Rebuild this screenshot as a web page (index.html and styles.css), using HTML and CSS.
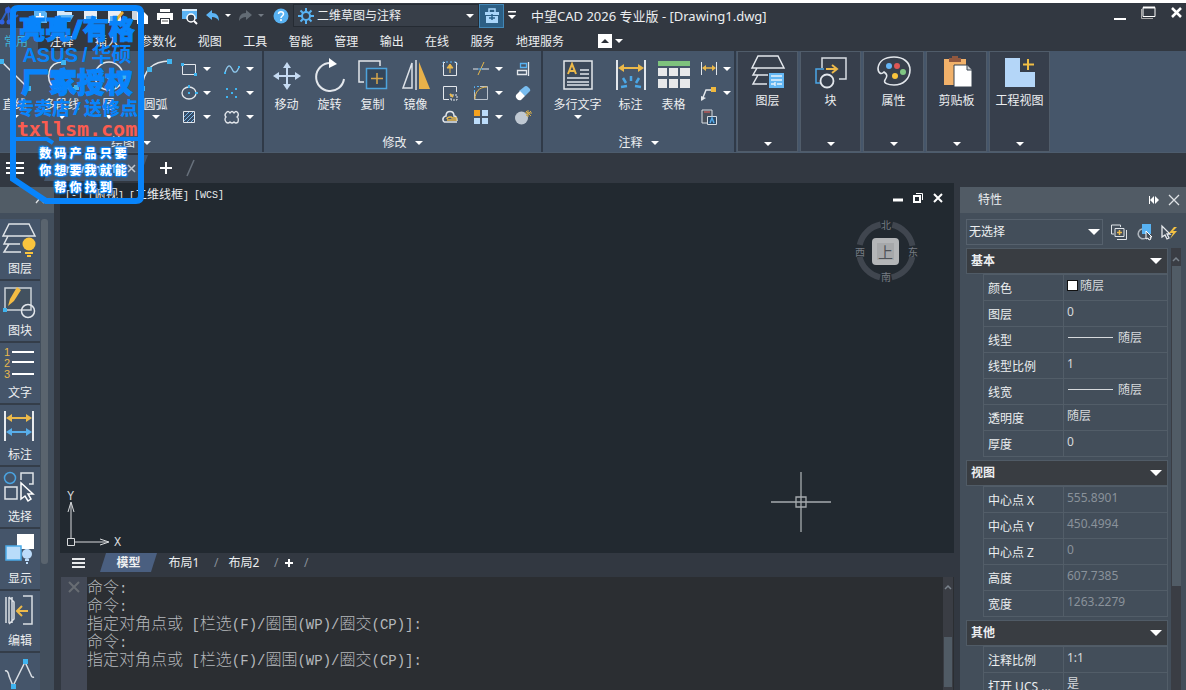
FILE: index.html
```html
<!DOCTYPE html>
<html lang="zh-CN">
<head>
<meta charset="utf-8">
<title>中望CAD 2026 专业版 - [Drawing1.dwg]</title>
<link rel="stylesheet" href="styles.css">
</head>
<body>
<div class="app">
  <header class="titlebar">
    <svg class="logo" width="22" height="22" viewBox="0 0 22 22" fill="none"><path d="M1 17L8 4l1 13 9-7" stroke="#2f62c4" stroke-width="2"/><circle cx="8" cy="5" r="3" fill="#2f62e0"/><circle cx="2" cy="17" r="2.500" fill="#2f62e0"/><circle cx="9" cy="17" r="2.500" fill="#2f62e0"/></svg>
    <button class="qbtn" aria-label="新建"><svg width="18" height="18" viewBox="0 0 18 18"><path d="M3 2h9l4 4v10H3z" fill="#5cb4f5"/><path d="M9 6v8M5 10h8" stroke="#fff" stroke-width="2"/></svg></button>
    <button class="qbtn" aria-label="打开"><svg width="18" height="18" viewBox="0 0 18 18"><path d="M1 15V3h6l2 2h7v3H5z" fill="#d7e9f8"/><path d="M5 8h13l-4 7H1z" fill="#5cb4f5"/></svg></button>
    <button class="qbtn" aria-label="保存"><svg width="18" height="18" viewBox="0 0 18 18"><path d="M3 2h11l2 2v12H3z" fill="#e9eef4"/><path d="M5 9h8v7H5z" fill="#5cb4f5"/></svg></button>
    <button class="qbtn" aria-label="另存为"><svg width="18" height="18" viewBox="0 0 18 18"><path d="M2 2h11l2 2v12H2z" fill="#e9eef4"/><path d="M4 9h8v7H4z" fill="#5cb4f5"/><path d="M9 12l7-8 2 2-7 8z" fill="#f0b23a"/></svg></button>
    <button class="qbtn" aria-label="复制"><svg width="18" height="18" viewBox="0 0 18 18"><path d="M1 2h9v11H1z" fill="#cdd6df"/><path d="M6 5h7l4 4v8H6z" fill="#fff"/></svg></button>
    <button class="qbtn" aria-label="打印"><svg width="18" height="18" viewBox="0 0 18 18"><path d="M4 2h10v3H4zM1 6h16v7h-3v-2H4v2H1z" fill="#fff"/><path d="M5 12h8v5H5z" fill="#fff"/><path d="M6 14h6" stroke="#555" stroke-width="1"/></svg></button>
    <button class="qbtn" aria-label="打印预览"><svg width="18" height="18" viewBox="0 0 18 18"><path d="M1 2h15v10H1z" fill="#5cb4f5"/><path d="M1 3h15" stroke="#dcebf7" stroke-width="2"/><circle cx="10" cy="11" r="4" fill="#38414c" stroke="#fff" stroke-width="1.500"/><path d="M13 14l3 3" stroke="#fff" stroke-width="2"/></svg></button>
    <button class="qbtn undo" aria-label="放弃"><svg width="16" height="16" viewBox="0 0 16 16"><path d="M1 7l6-5v3c5 0 7 3 7 8-2-3-4-4-7-4v3z" fill="#5cb4f5"/></svg><i class="caret"></i></button>
    <button class="qbtn redo" aria-label="重做"><svg width="16" height="16" viewBox="0 0 16 16"><path d="M14 7L8 2v3c-5 0-7 3-7 8 2-3 4-4 7-4v3z" fill="#626b74"/></svg><i class="caret dim"></i></button>
    <button class="qbtn" aria-label="帮助"><svg width="16" height="16" viewBox="0 0 16 16" fill="none"><circle cx="8" cy="8" r="7.500" fill="#58b2f2"/><path d="M5.500 6c0-3 5-3 5 0 0 2-2.500 2-2.500 4" stroke="#fff" stroke-width="1.500"/><circle cx="8" cy="12" r="1" fill="#fff"/></svg></button>
    <div class="workspace">
      <svg width="16" height="16" viewBox="0 0 16 16" fill="none" stroke="#58b2f2"><circle cx="8" cy="8" r="4" stroke-width="2"/><path d="M8 0v4M8 12v4M0 8h4M12 8h4M2.500 2.500L5 5M11 11l2.500 2.500M13.500 2.500L11 5M5 11l-2.500 2.500" stroke-width="2"/></svg>
      <select aria-label="工作空间"><option>二维草图与注释</option></select>
      <i class="caret"></i>
    </div>
    <button class="toolbox" aria-label="工具箱"><svg width="18" height="18" viewBox="0 0 18 18"><path d="M6 5V2h6v3" fill="none" stroke="#a9d6fa" stroke-width="1.500"/><path d="M2 5h14v3H2zM3 9h12v7H3z" fill="#a9d6fa"/><path d="M9 7v6M6 11h6" stroke="#2a628a" stroke-width="1.500"/></svg></button>
    <button class="more" aria-label="自定义"><svg width="10" height="9" viewBox="0 0 10 9" fill="#fff"><path d="M1 0h8v1.500H1zM1 4h8L5 8z"/></svg></button>
    <h1 class="title">中望CAD 2026 专业版 - [Drawing1.dwg]</h1>
    <div class="winctl">
      <button aria-label="最小化"><svg width="14" height="16" viewBox="0 0 14 16"><path d="M1 14h12" stroke="#fff" stroke-width="2"/></svg></button>
      <button aria-label="还原"><svg width="16" height="16" viewBox="0 0 16 16" fill="none" stroke="#fff"><path d="M3 2.500h12v9H3z"/><path d="M3 2.500h12" stroke-width="2"/><path d="M1.500 4v9.500H13" stroke="#aaa" stroke-width="1"/></svg></button>
      <button aria-label="关闭"><svg width="14" height="16" viewBox="0 0 14 16"><path d="M3 3l9 9M12 3l-9 9" stroke="#fff" stroke-width="2.500"/></svg></button>
    </div>
  </header>

  <div class="menubar">
    <nav class="menu">
      <a class="active" href="#home">常用</a><a href="#annotate">注释</a><a href="#insert">插入</a><a href="#param">参数化</a><a href="#view">视图</a><a href="#tools">工具</a><a href="#smart">智能</a><a href="#manage">管理</a><a href="#output">输出</a><a href="#online">在线</a><a href="#service">服务</a><a href="#geo">地理服务</a>
    </nav>
    <button class="fold" aria-label="折叠功能区"><svg width="14" height="14" viewBox="0 0 14 14"><path d="M0 0h14v14H0z" fill="#fff"/><path d="M3 9l4-4 4 4z" fill="#2b3038"/></svg><i class="caret"></i></button>
  </div>

  <section class="ribbon">
    <div class="group">
      <div class="tools draw">
        <button class="big"><svg width="36" height="36" viewBox="0 0 36 36"><path d="M4 4l28 28" stroke="#e3e7ec" stroke-width="1.500"/><path d="M2 2h5v5H2zM29 29h5v5h-5z" fill="#3fb4f0"/></svg><span>直线</span><i class="caret"></i></button>
        <button class="big"><svg width="36" height="36" viewBox="0 0 36 36"><path d="M19 5C3 5 1 22 10 31h20" fill="none" stroke="#e3e7ec" stroke-width="1.500"/><path d="M17 3h5v5h-5zM30 28h5v5h-5z" fill="#3fb4f0"/></svg><span>多段线</span><i class="caret"></i></button>
        <button class="big"><svg width="36" height="36" viewBox="0 0 36 36"><circle cx="18" cy="19" r="14" fill="none" stroke="#e3e7ec" stroke-width="1.500"/><path d="M16 17h5v5h-5zM30 17h5v5h-5z" fill="#3fb4f0"/></svg><span>圆</span><i class="caret"></i></button>
        <button class="big"><svg width="36" height="36" viewBox="0 0 36 36"><path d="M4 32C5 13 15 4 32 4" fill="none" stroke="#e3e7ec" stroke-width="1.500"/><path d="M29 2h5v5h-5zM9 10h5v5H9zM2 29h5v5H2z" fill="#3fb4f0"/></svg><span>圆弧</span><i class="caret"></i></button>
        <div class="minis two">
          <button aria-label="矩形"><svg width="18" height="18" viewBox="0 0 18 18"><path d="M2.500 4.500h13v10h-13z" fill="none" stroke="#e3e7ec"/><path d="M1 3h3v3H1zM14 13h3v3h-3z" fill="#3fb4f0"/></svg><i class="caret"></i></button>
          <button aria-label="样条曲线"><svg width="18" height="18" viewBox="0 0 18 18"><path d="M2 13C4 5 7 4 9 9s5 4 7-2" fill="none" stroke="#8fc9ee" stroke-width="1.300"/><path d="M1 12h2v2H1zM15 6h2v2h-2z" fill="#3fb4f0"/></svg><i class="caret"></i></button>
          <button aria-label="椭圆"><svg width="18" height="18" viewBox="0 0 18 18"><ellipse cx="9" cy="9" rx="7" ry="6" fill="none" stroke="#e3e7ec" stroke-width="1.300"/><path d="M8 8h2v2H8zM8 1h2v3H8zM15 8h3v2h-3z" fill="#3fb4f0"/></svg><i class="caret"></i></button>
          <button aria-label="点"><svg width="18" height="18" viewBox="0 0 18 18" fill="#3fb4f0"><path d="M3 4h2v2H3zM12 4h2v2h-2zM8 8h2v2H8zM3 12h2v2H3zM12 12h2v2h-2z"/></svg><i class="caret"></i></button>
          <button aria-label="填充"><svg width="18" height="18" viewBox="0 0 18 18"><path d="M3.500 3.500h11v11h-11z" fill="#364b66" stroke="#e3e7ec"/><path d="M4 9l5-5M4 13l9-9M7 14l7-7M11 14l3-3" stroke="#79b7e6"/></svg><i class="caret"></i></button>
          <button aria-label="修订云线"><svg width="18" height="18" viewBox="0 0 18 18"><path d="M3 5q2-3 4 0 2-3 4 0 2-3 4 0 1 3-1 4 2 1 1 5-2 2-4 0-2 2-4 0-2 2-4 0-2-3 0-5-2-2 0-4z" fill="none" stroke="#e3e7ec" stroke-width="1.300"/></svg><i class="caret"></i></button>
        </div>
      </div>
      <button class="grouplabel">绘图<i class="caret"></i></button>
    </div>

    <div class="group">
      <div class="tools modify">
        <button class="big"><svg width="36" height="36" viewBox="0 0 36 36"><path d="M18 9v20M8 19h20" stroke="#c5daf2" stroke-width="2"/><path d="M18 5l4 6h-8zM18 33l4-6h-8zM4 19l6-4v8zM32 19l-6-4v8z" fill="#c5daf2"/></svg><span>移动</span></button>
        <button class="big"><svg width="36" height="36" viewBox="0 0 36 36"><path d="M18 6A14 14 0 1 0 32 22" fill="none" stroke="#e3e7ec" stroke-width="2"/><path d="M17 1l8 6-8 4z" fill="#fff"/></svg><span>旋转</span></button>
        <button class="big"><svg width="36" height="36" viewBox="0 0 36 36" fill="none"><path d="M9 25H4V4h21v5" stroke="#e3e7ec" stroke-width="1.500"/><path d="M11.500 11.500h20v20h-20z" fill="#34465a" stroke="#4da3dc" stroke-width="1.500"/><path d="M22 16v11M16 21.500h12" stroke="#d3a54c" stroke-width="1.500"/></svg><span>复制</span></button>
        <button class="big"><svg width="36" height="36" viewBox="0 0 36 36"><path d="M14 6v25H5z" fill="none" stroke="#dce1e7" stroke-width="1.500"/><path d="M18 3v30" stroke="#dce1e7" stroke-width="1.500"/><path d="M21 5l11 27H21z" fill="#e8b14a"/></svg><span>镜像</span></button>
        <div class="minis three">
          <button aria-label="拉伸"><svg width="18" height="18" viewBox="0 0 18 18"><path d="M2 7V2h14v5" fill="none" stroke="#58b2f2" stroke-dasharray="2"/><path d="M4 2.500H2.500v13h13v-13H14" fill="none" stroke="#e3e7ec"/><path d="M9 5v8M9 4L6 8h6z" stroke="#e9b94c" fill="#e9b94c"/></svg></button>
          <button aria-label="修剪"><svg width="18" height="18" viewBox="0 0 18 18"><path d="M1 9h5M10 9h7" stroke="#e3e7ec"/><path d="M6 15L12 2" stroke="#e9b94c"/><path d="M6 9h5" stroke="#58b2f2"/></svg><i class="caret"></i></button>
          <button aria-label="对齐"><svg width="18" height="18" viewBox="0 0 18 18" fill="none"><path d="M14.500 2v14M3.500 10.500h9v4h-9z" stroke="#e3e7ec" stroke-width="1.300"/><path d="M6.500 3.500h6v4h-6z" stroke="#58b2f2" stroke-width="1.300"/></svg></button>
          <button aria-label="缩放"><svg width="18" height="18" viewBox="0 0 18 18" fill="none"><path d="M8 15.500H2.500v-13h13V8" stroke="#e3e7ec"/><path d="M10 16v-5h6v5z" stroke="#e3e7ec" stroke-dasharray="2 1"/><path d="M9 10l3 3" stroke="#e9b94c" stroke-width="2"/></svg></button>
          <button aria-label="圆角"><svg width="18" height="18" viewBox="0 0 18 18" fill="none"><path d="M2.500 8V2.500h6" stroke="#58b2f2" stroke-dasharray="2"/><path d="M2.500 8v7.500h13v-13H8" stroke="#b9c2cc"/><path d="M3 15C3 8 7 3 15 3" stroke="#e9b94c"/></svg><i class="caret"></i></button>
          <button aria-label="删除"><svg width="18" height="18" viewBox="0 0 18 18"><path d="M10 3q2-2 4 0l2 2q1 2-1 3l-4 4-6-5z" fill="#79bdf0"/><path d="M6 7l5 5-4 4q-2 1-4-1t-1-4z" fill="#fff"/></svg></button>
          <button aria-label="偏移"><svg width="18" height="18" viewBox="0 0 18 18" fill="none"><path d="M3 14C0 10 4 8 5 8c0-6 8-6 8 0 3 0 3 3 3 5M3 14h13" stroke="#e3e7ec" stroke-width="1.500"/><path d="M6 11c0-2 5-3 5-1h5M6 12h10" stroke="#e9b94c" stroke-width="1.500"/></svg></button>
          <button aria-label="阵列"><svg width="18" height="18" viewBox="0 0 18 18"><path d="M2 2h6v6H2z" fill="#f5a21f"/><path d="M10 2h6v6h-6zM2 10h6v6H2zM10 10h6v6h-6z" fill="#bcdcfa"/></svg><i class="caret"></i></button>
          <button aria-label="分解"><svg width="18" height="18" viewBox="0 0 18 18"><circle cx="7.500" cy="10" r="6.500" fill="#bfc8d2"/><path d="M14 2v7M11 5h7M12 3l5 5M17 3l-5 5" stroke="#d8b04c"/></svg></button>
        </div>
      </div>
      <button class="grouplabel">修改<i class="caret"></i></button>
    </div>

    <div class="group">
      <div class="tools annotate">
        <button class="big wide"><svg width="36" height="36" viewBox="0 0 36 36"><path d="M4 4h28v28H4z" fill="#3c495a" stroke="#e3e7ec" stroke-width="1.500"/><path d="M8 17l4-10 4 10M10 14h5" fill="none" stroke="#ecb94a" stroke-width="2"/><path d="M20 13h9M20 17h9M7 21h22M7 25h22M7 28h22" stroke="#dfe5ec" stroke-width="1.500"/></svg><span>多行文字</span><i class="caret"></i></button>
        <button class="big"><svg width="36" height="36" viewBox="0 0 36 36"><path d="M4 3v30M32 3v30" stroke="#e3e7ec" stroke-width="2"/><path d="M8 11h20" stroke="#ecb94a" stroke-width="2"/><path d="M5 11l6-4v8zM31 11l-6-4v8z" fill="#ecb94a"/><path d="M18 19v5M10 21l3 5M26 21l-3 5M8 30l6-1M28 30l-6-1" stroke="#4ba7e6" stroke-width="2.500"/></svg><span>标注</span></button>
        <button class="big"><svg width="36" height="36" viewBox="0 0 36 36"><path d="M2 4h32v5H2z" fill="#7ec27d"/><path d="M2 11h9v8H2zM13 11h9v8h-9zM24 11h10v8H24zM2 22h9v9H2zM13 22h9v9h-9zM24 22h10v9H24z" fill="#e7e8ea"/></svg><span>表格</span></button>
        <div class="minis one">
          <button aria-label="线性标注"><svg width="18" height="18" viewBox="0 0 18 18"><path d="M1.500 2v13M16.500 2v13" stroke="#e3e7ec"/><path d="M3 8h12" stroke="#ecb94a" stroke-width="1.500"/><path d="M2 8l4-3v6zM16 8l-4-3v6z" fill="#ecb94a"/></svg><i class="caret"></i></button>
          <button aria-label="引线"><svg width="18" height="18" viewBox="0 0 18 18"><path d="M2 16L6 6h6" fill="none" stroke="#e3e7ec" stroke-width="1.500"/><path d="M1 12v5l5-3" fill="#e3e7ec"/><path d="M11 3h5v5h-5z" fill="#f0b93e"/></svg><i class="caret"></i></button>
          <button aria-label="注释对象"><svg width="18" height="18" viewBox="0 0 18 18"><path d="M2 2h10v13H2z" fill="#48505b" stroke="#d8dde3"/><path d="M4 4h6" stroke="#b95b5b" stroke-width="1.500"/><path d="M7.500 8.500h9v8h-9z" fill="#2d4b68" stroke="#d8dde3"/><path d="M10 15l2-5 2 5" fill="none" stroke="#55a9e8" stroke-width="1.500"/></svg></button>
        </div>
      </div>
      <button class="grouplabel">注释<i class="caret"></i></button>
    </div>

    <div class="panels">
      <button class="panel"><svg width="36" height="36" viewBox="0 0 36 36"><path d="M8 2h20l6 12H2zM7 14l-4 7h15M8 21l-5 9h14" fill="none" stroke="#e3e7ec" stroke-width="1.500"/><path d="M19 19h15v15H19z" fill="#63b7f4"/><path d="M21 22h11M21 26h11M21 30h4M27 30h5M25 28v4" stroke="#e8f3fc" stroke-width="1.300"/></svg><span>图层</span><i class="caret"></i></button>
      <button class="panel"><svg width="36" height="36" viewBox="0 0 36 36" fill="none"><path d="M9 14V4h24v21h-7" stroke="#d9dee4" stroke-width="1.500"/><path d="M11 15H3v14h4" stroke="#4ba7e6" stroke-width="1.500"/><circle cx="14" cy="27" r="6.500" stroke="#e3e7ec" stroke-width="1.800"/><path d="M13 15h10M19 11l5 4-5 4" stroke="#ecb94a" stroke-width="2"/></svg><span>块</span><i class="caret"></i></button>
      <button class="panel"><svg width="36" height="36" viewBox="0 0 36 36"><path d="M18 3c9 0 16 5 16 13 0 9-7 15-16 15-6 0-11-2-9-5 3-4 2-6-1-8-3 3-6 1-6-4C3 7 9 3 18 3z" fill="none" stroke="#e3e7ec" stroke-width="1.600"/><circle cx="13" cy="12" r="3" fill="#64b5f6"/><circle cx="21" cy="12" r="3" fill="#df5654"/><circle cx="27" cy="18" r="3" fill="#7fc682"/><circle cx="19" cy="22" r="3" fill="#f8c33d"/></svg><span>属性</span><i class="caret"></i></button>
      <button class="panel"><svg width="36" height="36" viewBox="0 0 36 36"><path d="M5 5h22v26H5z" fill="#f1b16a"/><path d="M10 4h3V2h6v2h3v4H10z" fill="#91583f"/><path d="M15 11h13l5 5v17H15z" fill="#fff" stroke="#37404d"/><path d="M28 11v5h5" fill="#c9ced4" stroke="#37404d"/></svg><span>剪贴板</span><i class="caret"></i></button>
      <button class="panel"><svg width="36" height="36" viewBox="0 0 36 36"><path d="M3 4h15v14h15v15H3z" fill="#b4d6f8"/><path d="M26 5v11M21 10.500h11" stroke="#f0be45" stroke-width="2"/></svg><span>工程视图</span><i class="caret"></i></button>
    </div>
  </section>

  <div class="doctabs">
    <button class="burger" aria-label="文档列表"><svg width="18" height="14" viewBox="0 0 18 14"><path d="M0 2h18M0 7h18M0 12h18" stroke="#fff" stroke-width="2"/></svg></button>
    <button class="doctab"><span>Drawing1</span><svg width="9" height="9" viewBox="0 0 9 9"><path d="M1 1l7 7M8 1L1 8" stroke="#c0c7cf" stroke-width="1.500"/></svg></button>
    <button class="add" aria-label="新建图形"><svg width="14" height="14" viewBox="0 0 14 14"><path d="M7 1v12M1 7h12" stroke="#fff" stroke-width="2"/></svg></button>
    <svg width="10" height="18" viewBox="0 0 10 18"><path d="M1 17L8 1" stroke="#68717c" stroke-width="1.500"/></svg>
  </div>

  <div class="workarea">
    <aside class="palette">
      <div class="palettehead"><svg width="10" height="7" viewBox="0 0 10 7"><path d="M1 6l4-5 4 5" fill="none" stroke="#dfe3e7" stroke-width="1.300"/></svg></div>
      <div class="palettebody">
        <div class="palettelist">
          <button><svg width="38" height="38" viewBox="0 0 38 38"><path d="M8 3h20l6 12H2zM7 15l-4 8h16M8 23l-5 8h17" fill="none" stroke="#dfe3e8" stroke-width="1.500"/><circle cx="28" cy="23" r="6.500" fill="#fac43d"/><path d="M24 32h8M26 35h4" stroke="#fac43d" stroke-width="2"/></svg><span>图层</span></button>
          <button><svg width="38" height="38" viewBox="0 0 38 38"><path d="M4 5h26v22H4z" fill="#42515f" stroke="#ccd2d9" stroke-width="1.500"/><circle cx="27" cy="28" r="6.500" fill="none" stroke="#e3e7ec" stroke-width="1.500"/><path d="M7 23l2-7 7-12 4 3-7 11z" fill="#f3bc43"/><path d="M2 25h4v4H2z" fill="#3fb4f0"/></svg><span>图块</span></button>
          <button><svg width="38" height="38" viewBox="0 0 38 38"><path d="M11 7h22M11 17h22M11 29h22" stroke="#fff" stroke-width="2"/><g fill="#e8b94e" font-family="Liberation Sans, sans-serif" font-size="11"><text x="3" y="11">1</text><text x="3" y="22">2</text><text x="3" y="33">3</text></g></svg><span>文字</span></button>
          <button><svg width="38" height="38" viewBox="0 0 38 38"><path d="M4 4v30M32 4v30" stroke="#e8ebef" stroke-width="2"/><path d="M8 11h20" stroke="#ecb94a" stroke-width="2"/><path d="M5 11l6-4v8zM31 11l-6-4v8z" fill="#ecb94a"/><path d="M8 25h20" stroke="#58aeea" stroke-width="2"/><path d="M5 25l6-4v8zM31 25l-6-4v8z" fill="#58aeea"/></svg><span>标注</span></button>
          <button><svg width="38" height="38" viewBox="0 0 38 38" fill="none"><circle cx="9" cy="9" r="5.500" stroke="#4ba3e0" stroke-width="1.500"/><path d="M20 11V4h12v11h-4M4 18h12v12H4z" stroke="#dfe3e8" stroke-width="1.500"/><path d="M20 14v16l4-3 3 5 3-2-3-5h5z" fill="#45556a" stroke="#fff" stroke-width="1.500"/></svg><span>选择</span></button>
          <button><svg width="38" height="38" viewBox="0 0 38 38"><path d="M16 3h17v15H16z" fill="#fff"/><path d="M5 15h15v14H5z" fill="#b9dcfa" stroke="#49a9e8" stroke-width="1.500"/><circle cx="26" cy="23" r="5" fill="#bcdcfb"/><path d="M24 28h4v2h-4zM25 31h2v2h-2z" fill="#bcdcfb"/></svg><span>显示</span></button>
          <button><svg width="38" height="38" viewBox="0 0 38 38" fill="none"><path d="M5 4v26M8 4v26M11 4v26M8 4l5 5v17l-5 5M22 3h9v28h-9" stroke="#d9dee4" stroke-width="1.500"/><path d="M16 18h11M21 13l-5 5 5 5" stroke="#ecb94a" stroke-width="2"/></svg><span>编辑</span></button>
          <button><svg width="38" height="38" viewBox="0 0 38 38" fill="none"><path d="M4 16q3-1 4 5l4 10L24 7l6 13q1 3 3 2" stroke="#d9dee4" stroke-width="1.500"/><path d="M22 4h5v5h-5zM10 29h5v5h-5z" fill="#3fb4f0"/></svg><span>曲线</span></button>
        </div>
        <div class="palettescroll"></div>
      </div>
    </aside>

    <main class="center">
      <div class="canvas">
        <div class="viewlabel"><span>[-]</span><span>[<b>俯视</b>]</span><span>[<b>二维线框</b>]</span><span>[WCS]</span></div>
        <div class="mdi">
          <button aria-label="最小化视口"><svg width="12" height="12" viewBox="0 0 12 12"><path d="M1 8h10" stroke="#fff" stroke-width="3"/></svg></button>
          <button aria-label="还原视口"><svg width="12" height="12" viewBox="0 0 12 12" fill="none" stroke="#fff"><path d="M2 4h6v6H2z" stroke-width="2"/><path d="M4 1.500h6.500V8"/></svg></button>
          <button aria-label="关闭视口"><svg width="12" height="12" viewBox="0 0 12 12"><path d="M2 2l8 8M10 2l-8 8" stroke="#fff" stroke-width="2"/></svg></button>
        </div>
        <div class="compass">
          <svg width="64" height="64" viewBox="0 0 64 64"><circle cx="32" cy="32" r="27" fill="none" stroke="#40464f" stroke-width="6" stroke-dasharray="30.400 12" stroke-dashoffset="-6"/><rect x="18" y="19" width="27" height="27" rx="4" fill="#b4b6b8"/><rect x="23" y="24" width="17" height="17" fill="#a6a8aa"/></svg>
          <span class="n">北</span><span class="s">南</span><span class="w">西</span><span class="e">东</span><span class="top">上</span>
        </div>
        <div class="ucs">
          <svg width="60" height="60" viewBox="0 0 60 60" fill="none" stroke="#d8dadc"><path d="M3.500 48.500h7v7h-7zM7 48V14M11 52h33M7 12L4 22M7 12L10 22M45 52l-9-3M45 52l-9 3"/></svg>
          <span class="y">Y</span><span class="x">X</span>
        </div>
        <svg class="cross" width="62" height="62" viewBox="0 0 62 62" fill="none" stroke="#a7abae"><path d="M31 1v60M1 31h60" stroke-width="1.300"/><path d="M26 26h10v10H26z" stroke-width="1.300"/></svg>
      </div>
      <nav class="layouts">
        <button class="burger" aria-label="布局列表"><svg width="13" height="12" viewBox="0 0 13 12"><path d="M0 2h13M0 6h13M0 10h13" stroke="#e8eaec" stroke-width="2"/></svg></button>
        <button class="layout current">模型</button>
        <button class="layout">布局1</button><span class="slash">/</span>
        <button class="layout">布局2</button><span class="slash">/</span>
        <button class="layoutadd" aria-label="新建布局"><svg width="10" height="10" viewBox="0 0 10 10"><path d="M5 1v8M1 5h8" stroke="#fff" stroke-width="2"/></svg></button><span class="slash">/</span>
      </nav>
      <div class="command">
        <button class="grip" aria-label="关闭命令行"><svg width="12" height="12" viewBox="0 0 12 12"><path d="M1 1l10 10M11 1L1 11" stroke="#686d73" stroke-width="2"/></svg></button>
        <div class="log">
          <p>命令<i>:</i></p>
          <p>命令<i>:</i></p>
          <p>指定对角点或<i> [</i>栏选<i>(F)/</i>圈围<i>(WP)/</i>圈交<i>(CP)]:</i></p>
          <p>命令<i>:</i></p>
          <p>指定对角点或<i> [</i>栏选<i>(F)/</i>圈围<i>(WP)/</i>圈交<i>(CP)]:</i></p>
        </div>
        <div class="logscroll"><svg width="8" height="6" viewBox="0 0 8 6"><path d="M1 5l3-3 3 3" fill="none" stroke="#7a838c" stroke-width="1.500"/></svg><span></span></div>
      </div>
    </main>

    <aside class="props">
      <div class="propshead"><h2>特性</h2>
        <button aria-label="自动隐藏"><svg width="12" height="12" viewBox="0 0 12 12" fill="#fff"><path d="M1 2h1v8H1zM6 2v8L2 6zM7 2v8l4-4z"/></svg></button>
        <button aria-label="关闭特性"><svg width="12" height="12" viewBox="0 0 12 12"><path d="M1 1l10 10M11 1L1 11" stroke="#dfe2e5" stroke-width="1.300"/></svg></button>
      </div>
      <div class="selectrow">
        <div class="picker"><select aria-label="选择对象"><option>无选择</option></select><i class="caret large"></i></div>
        <button aria-label="切换加选"><svg width="18" height="18" viewBox="0 0 18 18" fill="none" stroke="#dfe3e7"><path d="M4 11H1.500v-9h9V4M5 5.500h9v8H5zM16.500 7v9.500H7"/><path d="M9.500 7v5M7 9.500h5" stroke="#ecb94a" stroke-width="1.500"/></svg></button>
        <button aria-label="选择对象"><svg width="18" height="18" viewBox="0 0 18 18"><path d="M7 1h9v10H7z" fill="#58b2f2"/><path d="M7 6a5 5 0 1 0 4 9" fill="none" stroke="#aeb5bd" stroke-width="1.500"/><path d="M11 8v8l2-1 1 2 2-1-1-2h2z" fill="#434e5a" stroke="#fff"/></svg></button>
        <button aria-label="快速选择"><svg width="18" height="18" viewBox="0 0 18 18"><path d="M2 3v11l3-2 2 4 2-1-2-4h3z" fill="none" stroke="#e6e9ec" stroke-width="1.300"/><path d="M14 4l-5 6h4l-3 6 7-8h-4l4-4z" fill="#f3c143"/></svg></button>
      </div>
      <div class="propsbody">
        <div class="sections">
          <section>
            <button class="sechead">基本<i class="caret large"></i></button>
            <table>
              <tr><th>颜色</th><td><span class="swatch"></span>随层</td></tr>
              <tr><th>图层</th><td>0</td></tr>
              <tr><th>线型</th><td><span class="stroke"></span>随层</td></tr>
              <tr><th>线型比例</th><td>1</td></tr>
              <tr><th>线宽</th><td><span class="stroke"></span>随层</td></tr>
              <tr><th>透明度</th><td>随层</td></tr>
              <tr><th>厚度</th><td>0</td></tr>
            </table>
          </section>
          <section>
            <button class="sechead">视图<i class="caret large"></i></button>
            <table class="readonly">
              <tr><th>中心点 X</th><td>555.8901</td></tr>
              <tr><th>中心点 Y</th><td>450.4994</td></tr>
              <tr><th>中心点 Z</th><td>0</td></tr>
              <tr><th>高度</th><td>607.7385</td></tr>
              <tr><th>宽度</th><td>1263.2279</td></tr>
            </table>
          </section>
          <section>
            <button class="sechead">其他<i class="caret large"></i></button>
            <table>
              <tr><th>注释比例</th><td>1:1</td></tr>
              <tr><th>打开 UCS ...</th><td>是</td></tr>
            </table>
          </section>
        </div>
        <div class="propscroll"><svg width="8" height="6" viewBox="0 0 8 6"><path d="M1 5l3-3 3 3" fill="none" stroke="#7a838c" stroke-width="1.500"/></svg><span></span></div>
      </div>
    </aside>
  </div>
</div>

<div class="stamp">
  <svg width="136" height="202" viewBox="0 0 136 202" fill="none" stroke="#0884fb" stroke-width="6"><path d="M9 4h118q5 0 5 5v183q0 5-5 5H37L4 175V9q0-5 5-5z"/><path d="M4 135h34l6 4M50 135h82" stroke-width="4"/></svg>
  <div class="stamptext">
    <p class="s1">亮亮<i>/</i>有格</p>
    <p class="s2">ASUS<i>/</i>华硕</p>
    <p class="s3">厂家授权</p>
    <p class="s4">专卖店<i>/</i>送修点</p>
    <p class="s5">txllsm.com</p>
    <p class="s6">数 码 产 品 只 要</p>
    <p class="s6">你 想 要 我 就 能</p>
    <p class="s6">帮 你 找 到</p>
  </div>
</div>
</body>
</html>
```

FILE: styles.css
```css
* { box-sizing: border-box; }
body {
  margin: 0;
  font: 12px/20px "Noto Sans", "Noto Sans CJK SC", sans-serif;
  color: #eceef0;
  background: #323841;
}
button, select {
  font: inherit;
  color: inherit;
  background: none;
  border: 0;
  padding: 0;
  margin: 0;
}
select { appearance: none; outline: 0; }
a { color: inherit; text-decoration: none; }
h1, h2, p { margin: 0; font-size: 12px; font-weight: 400; }
svg { display: block; flex: none; }
i { font-style: normal; }
.caret {
  flex: none;
  width: 0;
  border: 4px solid transparent;
  border-top-color: #fff;
  border-bottom: 0;
}
.caret.dim { border-top-color: #737b84; }
.caret.large { border-width: 6px 6px 0; }

.app {
  height: 100vh;
  display: flex;
  flex-direction: column;
  overflow: hidden;
  border-top: 3px solid #fff;
}

/* Title bar */
.titlebar { display: flex; align-items: center; height: 25px; flex: none; }
.logo { margin-right: 5px; }
.qbtn {
  width: 25px;
  height: 24px;
  flex: none;
  display: flex;
  align-items: center;
  justify-content: center;
}
.undo { width: 32px; gap: 4px; }
.redo { width: 34px; gap: 4px; }
.titlebar .undo .caret, .titlebar .redo .caret { border-width: 3px 3px 0; }
.workspace {
  width: 186px;
  height: 23px;
  flex: none;
  display: flex;
  align-items: center;
  gap: 3px;
  padding: 0 4px;
  background: #383f49;
  border: 1px solid #252b33;
}
.workspace select { flex: 1; }
.toolbox {
  width: 25px;
  height: 24px;
  flex: none;
  display: flex;
  align-items: center;
  justify-content: center;
  background: #2c5f85;
  border: 1px solid #4287b6;
}
.more { width: 15px; display: flex; justify-content: center; }
.title { margin-left: 12px; font-size: 13px; white-space: nowrap; }
.winctl { margin-left: auto; display: flex; gap: 13px; padding: 0 3px 5px 0; }

/* Menu tabs */
.menubar { display: flex; align-items: stretch; height: 23px; flex: none; }
.menu {
  width: 564px;
  display: flex;
  justify-content: space-between;
  line-height: 28px;
  white-space: nowrap;
}
.menu .active {
  padding: 0 10px 0 4px;
  margin-right: -10px;
  color: #3fb7d9;
  background: #46566a;
}
.fold { display: flex; align-items: center; gap: 3px; margin-left: 34px; padding-top: 2px; }

/* Ribbon */
.ribbon {
  display: flex;
  height: 102px;
  flex: none;
  background: #46566a;
  border-bottom: 1px solid #4d5c6d;
}
.group {
  display: flex;
  flex-direction: column;
  flex: none;
  border-right: 2px solid #303a48;
}
.tools { display: flex; flex: 1; padding-top: 6px; }
.draw { margin-left: -9px; padding-right: 9px; }
.draw .big { width: 47px; }
.modify { padding: 6px 9px 0 1px; }
.annotate { padding: 6px 0 0 3px; }
.big {
  width: 43px;
  display: flex;
  flex-direction: column;
  align-items: center;
  white-space: nowrap;
}
.big span { margin-top: 2px; }
.big.wide { width: 63px; }
.minis { display: grid; grid-auto-rows: 24px; align-content: start; margin-left: 1px; }
.minis.two { grid-template-columns: 43px 30px; }
.minis.three { grid-template-columns: 31px 42px 18px; margin-left: 4px; }
.minis.one { grid-template-columns: 34px; margin-left: 5px; }
.minis button { display: flex; align-items: center; gap: 5px; }
.grouplabel {
  display: flex;
  align-items: center;
  justify-content: center;
  gap: 8px;
  height: 19px;
}
.panels { display: flex; gap: 2px; padding-left: 1px; }
.panel {
  width: 61px;
  height: 101px;
  display: flex;
  flex-direction: column;
  align-items: center;
  padding: 2px 0 5px;
  white-space: nowrap;
  background: #373f4c;
  border: 1px solid #505c6a;
}
.panel span { margin-top: 1px; }
.panel .caret { margin-top: auto; }

/* Document tabs */
.doctabs { display: flex; align-items: center; height: 30px; flex: none; padding-left: 6px; }
.doctab {
  display: flex;
  align-items: center;
  justify-content: center;
  gap: 10px;
  width: 104px;
  height: 26px;
  margin: 0 15px 0 20px;
  font-size: 13px;
  font-weight: 700;
  background: #46566a;
  clip-path: polygon(8px 0, 100% 0, calc(100% - 10px) 100%, 0 100%);
}
.add { margin: 0 13px 0 -4px; }

/* Main area */
.workarea { display: flex; flex: 1; min-height: 0; }
.palette {
  width: 54px;
  flex: none;
  display: flex;
  flex-direction: column;
  margin-top: 4px;
  background: #424e5c;
}
.palettehead {
  height: 26px;
  flex: none;
  display: flex;
  align-items: center;
  justify-content: flex-end;
  padding-right: 9px;
  background: #515c66;
}
.palettebody { display: flex; flex: 1; min-height: 0; padding-top: 6px; }
.palettelist { width: 40px; overflow: hidden; }
.palettelist button {
  width: 100%;
  height: 62px;
  display: flex;
  flex-direction: column;
  align-items: center;
  justify-content: flex-end;
  background: #45556a;
  border-bottom: 2px solid #343d49;
}
.palettescroll {
  width: 7px;
  height: 345px;
  margin-left: 1px;
  border-radius: 3px;
  background: #5a646e;
}
.center {
  flex: 1;
  min-width: 0;
  display: flex;
  flex-direction: column;
  margin: 0 6px;
}
.canvas { position: relative; flex: 1; background: #222930; }
.viewlabel {
  display: flex;
  gap: 5px;
  padding: 3px 0 0 5px;
  font-family: "Liberation Mono", "Noto Sans CJK SC", monospace;
  font-size: 10px;
}
.viewlabel b { font-size: 12px; font-weight: 400; }
.mdi { position: absolute; top: 9px; right: 10px; display: flex; gap: 8px; }
.compass { position: absolute; top: 36px; right: 36px; width: 64px; height: 64px; color: #767c83; }
.compass span { position: absolute; font-size: 10px; line-height: 12px; }
.compass .n { top: 0; left: 27px; }
.compass .s { bottom: 0; left: 27px; }
.compass .w { top: 27px; left: 1px; }
.compass .e { top: 27px; right: 0; }
.compass .top { top: 24px; left: 24px; font-size: 15px; line-height: 18px; color: #4e5257; }
.ucs { position: absolute; left: 4px; bottom: 3px; width: 60px; height: 60px; }
.ucs span {
  position: absolute;
  font: 12px/12px "Liberation Mono", monospace;
  color: #d8dadc;
}
.ucs .y { left: 3px; top: 1px; }
.ucs .x { left: 50px; bottom: 1px; }
.cross { position: absolute; right: 122px; bottom: 20px; }
.layouts { display: flex; align-items: center; height: 24px; flex: none; padding: 0 0 5px 12px; }
.layout { width: 60px; height: 19px; line-height: 18px; }
.layout.current {
  width: 57px;
  margin: 0 -3px 0 15px;
  font-weight: 700;
  background: #4a5f80;
  clip-path: polygon(6px 0, 100% 0, calc(100% - 6px) 100%, 0 100%);
}
.slash { width: 0; color: #88909a; }
.layoutadd { margin: 0 10px; }
.command { display: flex; height: 113px; flex: none; margin-left: 1px; background: #2b2e32; }
.grip {
  width: 26px;
  flex: none;
  display: flex;
  justify-content: center;
  padding-top: 4px;
  background: #434956;
}
.log {
  flex: 1;
  color: #b5b8bc;
  font-family: "Noto Sans CJK SC", sans-serif;
}
.log p { font-size: 16px; line-height: 18px; font-weight: 300; white-space: pre; }
.log i { font-family: "Liberation Mono", monospace; font-size: 14px; line-height: 8px; }
.logscroll, .propscroll { display: flex; flex-direction: column; align-items: center; flex: none; background: #3a3d44; }
.logscroll { width: 10px; margin-right: 1px; padding-top: 7px; }
.logscroll span { width: 8px; height: 50px; margin-top: 47px; background: #505b65; }

/* Properties */
.props {
  width: 226px;
  flex: none;
  display: flex;
  flex-direction: column;
  margin-top: 4px;
  background: #434e5a;
}
.propshead {
  display: flex;
  align-items: center;
  gap: 8px;
  height: 26px;
  flex: none;
  padding: 0 6px 0 18px;
  background: #515b65;
}
.propshead h2 { flex: 1; }
.selectrow { display: flex; align-items: center; gap: 7px; flex: none; padding: 6px 8px 3px 6px; }
.picker {
  flex: 1;
  min-width: 0;
  height: 26px;
  display: flex;
  align-items: center;
  padding: 0 2px;
  border: 1px solid #56616d;
}
.picker select { flex: 1; }
.propsbody { display: flex; flex: 1; min-height: 0; gap: 3px; padding: 0 5px 0 6px; }
.sections { flex: 1; overflow: hidden; }
.sections section { margin-bottom: 3px; }
.sechead {
  display: flex;
  align-items: center;
  justify-content: space-between;
  width: 100%;
  height: 26px;
  padding: 0 5px 0 4px;
  font-weight: 700;
  background: #393d42;
  border: 1px solid #505b66;
}
.sections table {
  width: calc(100% - 17px);
  margin-left: 17px;
  table-layout: fixed;
  border-collapse: collapse;
}
.sections tr { height: 26px; }
.sections th, .sections td { border: 1px solid #525d68; line-height: 18px; white-space: nowrap; }
.sections th { width: 80px; padding: 2px 0 0 4px; font-weight: 400; text-align: left; }
.sections td { padding: 0 0 3px 3px; color: #d6d9dc; }
.sections .readonly td { color: #8a929a; }
.swatch {
  display: inline-block;
  width: 11px;
  height: 11px;
  margin-right: 2px;
  vertical-align: -1px;
  background: #fff;
  border: 1px solid #111;
}
.stroke { display: inline-block; width: 45px; height: 1px; margin: 0 5px 0 1px; vertical-align: 4px; background: #d6d9dc; }
.propscroll { width: 10px; padding-top: 8px; }
.propscroll span { width: 9px; height: 320px; margin-top: 4px; background: #515c66; }

/* Shop stamp laid over the window */
.stamp { position: absolute; top: 4px; left: 9px; width: 136px; color: #0884fb; pointer-events: none; }
.stamptext {
  position: absolute;
  top: 11px;
  left: 0;
  width: 100%;
  display: flex;
  flex-direction: column;
  align-items: center;
  white-space: nowrap;
}
.stamptext p { font-weight: 900; }
.stamptext .s1 { font-size: 26px; line-height: 28px; }
.stamptext .s2 { font-family: "Liberation Sans", "Noto Sans CJK SC", sans-serif; font-size: 20px; line-height: 24px; font-weight: 700; }
.stamptext .s3 { font-size: 28px; line-height: 30px; }
.stamptext .s1, .stamptext .s3 { -webkit-text-stroke: 1px #0884fb; }
.stamptext .s4 { font-size: 18px; line-height: 22px; }
.stamptext .s5 {
  font-family: "DejaVu Sans Mono", monospace;
  font-size: 20px;
  line-height: 20px;
  font-weight: 700;
  color: #fb5c50;
}
.stamptext .s2 i { padding: 0 4px; }
.stamptext .s4 i { padding: 0 3px; }
.stamptext .s6 {
  padding-left: 12px;
  font-size: 12px;
  line-height: 17px;
  font-weight: 900;
  color: #fff;
  text-shadow: 1px 0 1px #0884fb, -1px 0 1px #0884fb, 0 1px 1px #0884fb, 0 -1px 1px #0884fb, 1px 1px 2px #0884fb, -1px -1px 2px #0884fb;
}
.stamptext .s5 + .s6 { margin-top: 6px; }
```
